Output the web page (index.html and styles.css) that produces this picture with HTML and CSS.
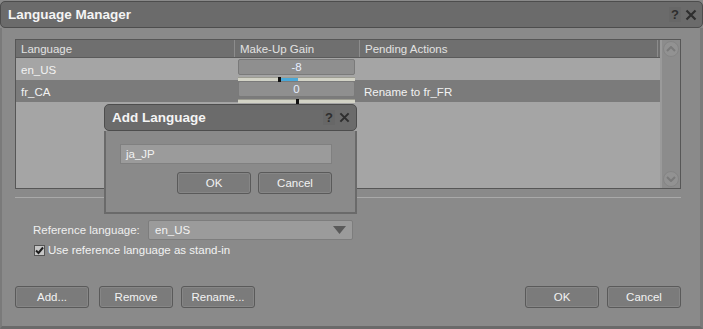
FILE: index.html
```html
<!DOCTYPE html>
<html lang="en">
<head>
  <meta charset="UTF-8">
  <title>Language Manager</title>
  <link rel="stylesheet" href="styles.css">
</head>
<body>
  <div class="window">
    <div class="titlebar">
      <span class="title">Language Manager</span>
      <div class="title-icons">
        <span class="help">?</span>
        <svg class="close" width="12" height="12" viewBox="0 0 12 12"><path d="M1.5 1.5 L10.5 10.5 M10.5 1.5 L1.5 10.5" stroke="#2e2e2e" stroke-width="2.2"/></svg>
      </div>
    </div>

    <div class="main">
      <div class="table">
        <div class="table-body">
          <div class="row header">
            <div class="cell">Language</div>
            <div class="cell">Make-Up Gain</div>
            <div class="cell">Pending Actions</div>
          </div>
          <div class="row light">
            <div class="cell">en_US</div>
            <div class="cell gain">
              <div class="gain-box">-8</div>
              <div class="track">
                <div class="fill" style="left: 42px; width: 18px;"></div>
                <div class="thumb" style="left: 40px;"></div>
              </div>
            </div>
            <div class="cell"></div>
          </div>
          <div class="row dark">
            <div class="cell">fr_CA</div>
            <div class="cell gain">
              <div class="gain-box">0</div>
              <div class="track">
                <div class="thumb" style="left: 58px;"></div>
              </div>
            </div>
            <div class="cell">Rename to fr_FR</div>
          </div>
          <div class="filler"></div>
        </div>
        <div class="scrollbar">
          <div class="scroll-btn">
            <svg width="10" height="6" viewBox="0 0 10 6"><path d="M1 5 L5 1 L9 5" stroke="#7a7a7a" stroke-width="2" fill="none"/></svg>
          </div>
          <div class="scroll-btn">
            <svg width="10" height="6" viewBox="0 0 10 6"><path d="M1 1 L5 5 L9 1" stroke="#7a7a7a" stroke-width="2" fill="none"/></svg>
          </div>
        </div>
      </div>

      <div class="separator"></div>

      <div class="ref-row">
        <span class="ref-label">Reference language:</span>
        <div class="combo">
          <span>en_US</span>
          <svg width="13" height="8" viewBox="0 0 13 8"><path d="M0 0 L13 0 L6.5 8 Z" fill="#5a5a5a"/></svg>
        </div>
      </div>

      <div class="check-row">
        <span class="checkbox">
          <svg width="9" height="9" viewBox="0 0 9 9"><path d="M1 4.5 L3.5 7 L8 1.5" stroke="#1e1e1e" stroke-width="2" fill="none"/></svg>
        </span>
        <span>Use reference language as stand-in</span>
      </div>

      <div class="button-row">
        <div class="group">
          <button>Add...</button>
          <button class="gap">Remove</button>
          <button>Rename...</button>
        </div>
        <div class="group">
          <button>OK</button>
          <button>Cancel</button>
        </div>
      </div>
    </div>

    <div class="dialog">
      <div class="titlebar small">
        <span class="title">Add Language</span>
        <div class="title-icons">
          <span class="help">?</span>
          <svg class="close" width="11" height="11" viewBox="0 0 12 12"><path d="M1.5 1.5 L10.5 10.5 M10.5 1.5 L1.5 10.5" stroke="#2e2e2e" stroke-width="2.2"/></svg>
        </div>
      </div>
      <div class="dialog-body">
        <div class="text-input">ja_JP</div>
        <div class="dialog-buttons">
          <button>OK</button>
          <button>Cancel</button>
        </div>
      </div>
    </div>
  </div>
</body>
</html>
```

FILE: styles.css
```css
body {
  margin: 0;
  background-color: #8a8a8a;
  font-family: "Liberation Sans", Arial, sans-serif;
  font-size: 11.5px;
  color: #f2f2f2;
}
.window {
  position: relative;
  width: 703px;
  height: 329px;
  display: flex;
  flex-direction: column;
  box-sizing: border-box;
  background-color: #8a8a8a;
}
.titlebar {
  height: 27px;
  box-sizing: border-box;
  margin-top: 1px;
  background-color: #6b6b6b;
  border: 1px solid #4d4d4d;
  border-radius: 5px;
  display: flex;
  align-items: center;
  justify-content: space-between;
  padding: 0 5px 0 7px;
}
.title {
  font-size: 13.5px;
  font-weight: bold;
  color: #f4f4f4;
}
.title-icons {
  display: flex;
  align-items: center;
  gap: 4px;
}
.help {
  font-size: 13px;
  font-weight: bold;
  color: #2e2e2e;
  background-color: #676767;
  padding: 0 2px;
}
.main {
  flex: 1;
  display: flex;
  flex-direction: column;
  border-left: 2px solid #7a7a7a;
  border-right: 3px solid #7a7a7a;
  border-bottom: 3px solid #6a6a6a;
  padding: 11px 19px 18px 13px;
}
.table {
  height: 150px;
  box-sizing: border-box;
  border: 1px solid #565656;
  display: flex;
  background-color: #a5a5a5;
}
.table-body {
  flex: 1;
  display: flex;
  flex-direction: column;
}
.row {
  display: grid;
  grid-template-columns: 218px 125px 1fr;
  height: 22px;
}
.row .cell {
  padding-left: 5px;
  display: flex;
  align-items: center;
}
.header {
  height: 17px;
  background-color: #6f6f6f;
  border-bottom: 1px solid #5a5a5a;
  color: #e2e2e2;
}
.header .cell + .cell {
  border-left: 1px solid #8c8c8c;
}
.header .cell:last-child {
  border-right: 1px solid #8c8c8c;
  margin-right: 2px;
}
.light {
  background-color: #a5a5a5;
}
.dark {
  background-color: #7b7b7b;
}
.cell.gain {
  padding: 1px 4px 0 4px;
  flex-direction: column;
  align-items: stretch;
}
.gain-box {
  height: 14px;
  background-color: #8f8f8f;
  border: 1px solid #7a7a7a;
  border-radius: 2px;
  text-align: center;
  line-height: 14px;
  color: #e6eeff;
}
.track {
  position: relative;
  height: 3px;
  margin-top: 2px;
  background-color: #d3d3c6;
  border-top: 1px solid #9d9d92;
}
.fill {
  position: absolute;
  top: 0;
  height: 3px;
  background-color: #4aa8d8;
}
.thumb {
  position: absolute;
  top: -1px;
  width: 3px;
  height: 5px;
  background-color: #111;
}
.filler {
  flex: 1;
  background-color: #a5a5a5;
}
.scrollbar {
  width: 18px;
  background-color: #8c8c8c;
  border-left: 2px solid #9a9a9a;
  display: flex;
  flex-direction: column;
  justify-content: space-between;
  align-items: center;
  padding: 1px 0;
}
.scroll-btn {
  width: 14px;
  height: 14px;
  border-radius: 50%;
  background-color: #929292;
  border: 1px solid #858585;
  display: flex;
  align-items: center;
  justify-content: center;
}
.separator {
  margin-top: 8px;
  height: 1px;
  background-color: #a9a9a9;
}
.ref-row {
  margin-top: 22px;
  display: flex;
  align-items: center;
}
.ref-label {
  width: 115px;
  padding-left: 18px;
  color: #efefef;
}
.combo {
  width: 205px;
  height: 20px;
  box-sizing: border-box;
  background-color: #9b9b9b;
  border: 1px solid #7d7d7d;
  border-radius: 2px;
  display: flex;
  align-items: center;
  justify-content: space-between;
  padding: 0 6px;
}
.check-row {
  margin-top: 4px;
  padding-left: 19px;
  display: flex;
  align-items: center;
  gap: 3px;
}
.checkbox {
  width: 9px;
  height: 9px;
  border: 1px solid #555;
  background-color: #c6c6c6;
  display: flex;
}
.button-row {
  margin-top: auto;
  display: flex;
  justify-content: space-between;
}
.group {
  display: flex;
  gap: 8px;
}
.group .gap {
  margin-left: 2px;
}
button {
  width: 74px;
  height: 22px;
  background-color: #7b7b7b;
  border: 1px solid #5a5a5a;
  border-radius: 3px;
  box-shadow: inset 0 0 0 1px #868686;
  color: #f2f2f2;
  font-family: "Liberation Sans", Arial, sans-serif;
  font-size: 11.5px;
  padding: 0;
}
.dialog {
  position: absolute;
  left: 104px;
  top: 103px;
  width: 253px;
  display: flex;
  flex-direction: column;
}
.titlebar.small {
  padding-left: 7px;
  padding-right: 6px;
}
.dialog-body {
  height: 83px;
  box-sizing: border-box;
  background-color: #8a8a8a;
  border: 2px solid #6a6a6a;
  border-top: none;
  padding: 13px 23px 0 14px;
  display: flex;
  flex-direction: column;
}
.text-input {
  height: 20px;
  box-sizing: border-box;
  background-color: #9b9b9b;
  border: 1px solid #808080;
  padding-left: 5px;
  line-height: 18px;
  color: #f2f2f2;
}
.dialog-buttons {
  margin-top: 8px;
  display: flex;
  justify-content: flex-end;
  gap: 7px;
}
```
